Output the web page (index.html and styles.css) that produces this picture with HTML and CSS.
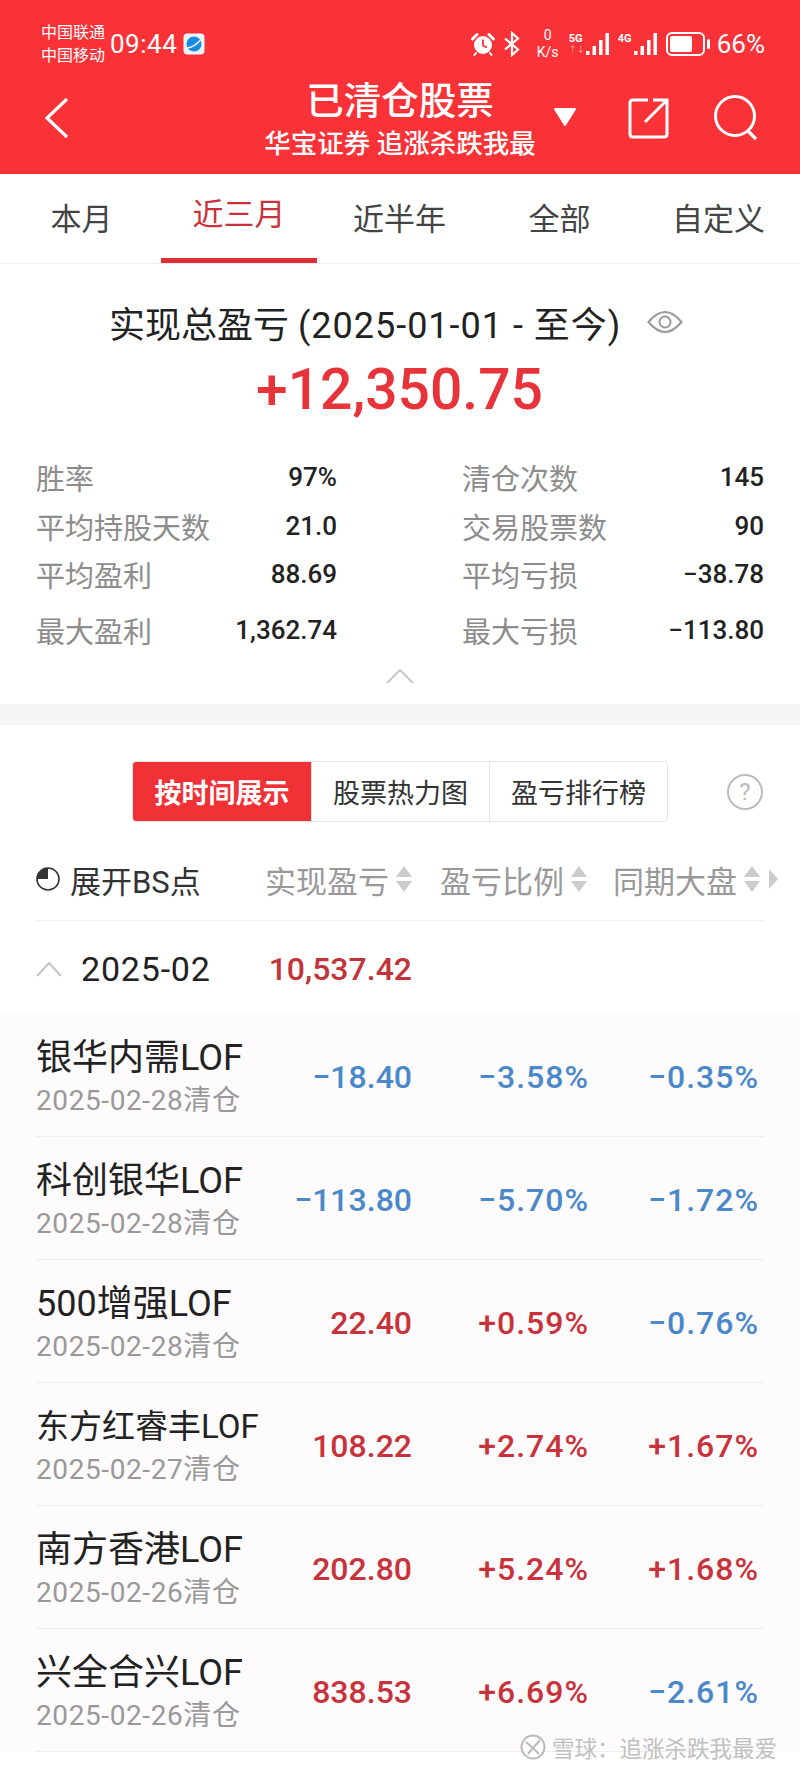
FILE: index.html
```html
<!DOCTYPE html>
<html lang="zh-CN">
<head>
  <meta charset="UTF-8" />
  <meta name="viewport" content="width=device-width, initial-scale=1" />
  <title>已清仓股票</title>
  <link rel="stylesheet" href="styles.css">
</head>
<body>
<div class="page">

  <header class="top">
    <div class="status">
      <div class="carrier"><span>中国联通</span><span>中国移动</span></div>
      <span class="clock">09:44</span>
      <svg class="app-icon" viewBox="0 0 22 22" width="22" height="22">
        <rect x="0.5" y="0.5" width="21" height="21" rx="4" fill="#eaf4fc"/>
        <circle cx="11" cy="11" r="7.5" fill="#1a8be0"/>
        <path d="M3.5 15 C9 15 15 10 18.5 6" stroke="#eaf4fc" stroke-width="1.4" fill="none"/>
      </svg>
      <div class="status-right">
        <svg class="alarm" viewBox="0 0 24 24" width="24" height="24">
          <circle cx="12" cy="13" r="9" fill="#fff"/>
          <path d="M1.5 7 L6 2.5 M22.5 7 L18 2.5" stroke="#fff" stroke-width="3" stroke-linecap="round"/>
          <path d="M5 21 L3.5 23 M19 21 L20.5 23" stroke="#fff" stroke-width="2" stroke-linecap="round"/>
          <path d="M12 7.5 V13.5 L16 15.5" stroke="#f93238" stroke-width="1.8" fill="none"/>
        </svg>
        <svg class="bt" viewBox="0 0 18 26" width="18" height="26">
          <path d="M2 7.5 L15 18.5 L9 24 V2 L15 7.5 L2 18.5" stroke="#fff" stroke-width="2.2" fill="none"/>
        </svg>
        <div class="speed"><span>0</span><span>K/s</span></div>
        <div class="net">
          <div class="net-label"><b>5G</b><i>↑↓</i></div>
          <svg viewBox="0 0 25 24" width="25" height="24"><path d="M1 19h3.5v4H1zM7.500 14h3.500v9H7.500zM14 8h3.500v15H14zM20.500 1H24v22h-3.500z" fill="#fff"/></svg>
        </div>
        <div class="net">
          <div class="net-label"><b>4G</b><i></i></div>
          <svg viewBox="0 0 25 24" width="25" height="24"><path d="M1 19h3.500v4H1zM7.500 14h3.500v9H7.500zM14 8h3.500v15H14zM20.500 1H24v22h-3.500z" fill="#fff"/></svg>
        </div>
        <svg class="battery" viewBox="0 0 45 24" width="45" height="24">
          <rect x="1" y="1" width="37" height="22" rx="5" fill="none" stroke="#fff" stroke-width="2"/>
          <rect x="4" y="4" width="22" height="16" rx="2" fill="#fff"/>
          <rect x="41" y="7" width="3" height="10" rx="1.5" fill="#fff"/>
        </svg>
        <span class="pct">66%</span>
      </div>
    </div>
    <div class="nav">
      <svg class="back" viewBox="0 0 26 42" width="26" height="42">
        <path d="M23 2 L3 21 L23 40" stroke="#fff" stroke-width="3.2" fill="none"/>
      </svg>
      <div class="nav-title">
        <h1>已清仓股票</h1>
        <p>华宝证券 追涨杀跌我最</p>
      </div>
      <svg class="drop" viewBox="0 0 24 20" width="24" height="20">
        <path d="M2 2 H22 L12 18 Z" fill="#fff" stroke="#fff" stroke-width="2" stroke-linejoin="round"/>
      </svg>
      <svg class="share" viewBox="0 0 42 42" width="42" height="42">
        <path d="M20 3 H5 Q2 3 2 6 V37 Q2 40 5 40 H36 Q39 40 39 37 V3 H25 M39 3 L17 25" stroke="#fff" stroke-width="3" fill="none"/>
      </svg>
      <svg class="search" viewBox="0 0 46 46" width="46" height="46">
        <circle cx="22" cy="21" r="19.5" stroke="#fff" stroke-width="3" fill="none"/>
        <path d="M35 36 L43 44" stroke="#fff" stroke-width="3.4"/>
      </svg>
    </div>
  </header>

  <nav class="tabs">
    <a>本月</a>
    <a class="active">近三月</a>
    <a>近半年</a>
    <a>全部</a>
    <a>自定义</a>
  </nav>

  <section class="summary">
    <div class="sum-title">
      <span>实现总盈亏 <span class="range">(2025-01-01 - 至今)</span></span>
      <svg class="eye" viewBox="0 0 36 26" width="36" height="26">
        <path d="M1.5 13 Q18 -7 34.500 13 Q18 33 1.5 13 Z" stroke="#999" stroke-width="2" fill="none"/>
        <circle cx="18" cy="13" r="5.500" stroke="#999" stroke-width="2" fill="none"/>
      </svg>
    </div>
    <div class="sum-amount">+12,350.75</div>
    <div class="stats">
      <div class="stat"><span>胜率</span><b>97%</b></div>
      <div class="stat"><span>清仓次数</span><b>145</b></div>
      <div class="stat"><span>平均持股天数</span><b>21.0</b></div>
      <div class="stat"><span>交易股票数</span><b>90</b></div>
      <div class="stat"><span>平均盈利</span><b>88.69</b></div>
      <div class="stat"><span>平均亏损</span><b>−38.78</b></div>
      <div class="stat tall"><span>最大盈利</span><b>1,362.74</b></div>
      <div class="stat tall"><span>最大亏损</span><b>−113.80</b></div>
    </div>
    <svg class="fold" viewBox="0 0 28 16" width="28" height="16">
      <path d="M1 15 L14 2 L27 15" stroke="#c8c8c8" stroke-width="2" fill="none"/>
    </svg>
  </section>

  <div class="band"></div>

  <div class="seg-row">
    <div class="seg">
      <a class="on">按时间展示</a>
      <a>股票热力图</a>
      <a>盈亏排行榜</a>
    </div>
    <span class="help">?</span>
  </div>

  <div class="thead">
    <div class="bs">
      <svg viewBox="0 0 24 24" width="24" height="24">
        <circle cx="12" cy="12" r="11" stroke="#333" stroke-width="1.600" fill="none"/>
        <path d="M12 12 V1 A11 11 0 0 0 1 12 Z" fill="#333"/>
      </svg>
      <span>展开BS点</span>
    </div>
    <div class="th"><span>实现盈亏</span><i class="sort"></i></div>
    <div class="th"><span>盈亏比例</span><i class="sort"></i></div>
    <div class="th"><span>同期大盘</span><i class="sort"></i><i class="more"></i></div>
  </div>

  <div class="group">
    <svg viewBox="0 0 26 16" width="26" height="16">
      <path d="M1 15 L13 2 L25 15" stroke="#c4c4c4" stroke-width="2" fill="none"/>
    </svg>
    <span class="month">2025-02</span>
    <b class="month-val">10,537.42</b>
  </div>

  <div class="list">
    <div class="row">
      <div class="name"><strong>银华内需LOF</strong><small>2025-02-28清仓</small></div>
      <span class="down">−18.40</span><span class="down">−3.58%</span><span class="down">−0.35%</span>
    </div>
    <div class="row">
      <div class="name"><strong>科创银华LOF</strong><small>2025-02-28清仓</small></div>
      <span class="down">−113.80</span><span class="down">−5.70%</span><span class="down">−1.72%</span>
    </div>
    <div class="row">
      <div class="name"><strong>500增强LOF</strong><small>2025-02-28清仓</small></div>
      <span class="up">22.40</span><span class="up">+0.59%</span><span class="down">−0.76%</span>
    </div>
    <div class="row">
      <div class="name"><strong class="small-name">东方红睿丰LOF</strong><small>2025-02-27清仓</small></div>
      <span class="up">108.22</span><span class="up">+2.74%</span><span class="up">+1.67%</span>
    </div>
    <div class="row">
      <div class="name"><strong>南方香港LOF</strong><small>2025-02-26清仓</small></div>
      <span class="up">202.80</span><span class="up">+5.24%</span><span class="up">+1.68%</span>
    </div>
    <div class="row">
      <div class="name"><strong>兴全合兴LOF</strong><small>2025-02-26清仓</small></div>
      <span class="up">838.53</span><span class="up">+6.69%</span><span class="down">−2.61%</span>
    </div>
  </div>

  <div class="watermark">
    <svg viewBox="0 0 26 26" width="26" height="26">
      <circle cx="13" cy="13" r="11.500" stroke="#bbb" stroke-width="2" fill="#fff" fill-opacity="0.6"/>
      <path d="M6 8 L13 14 L8 20 M20 6 L13 14 L19 20" stroke="#bbb" stroke-width="2" fill="none"/>
    </svg>
    <span>雪球：追涨杀跌我最爱</span>
  </div>

</div>
</body>
</html>
```

FILE: styles.css
```css
* {
  box-sizing: border-box;
}
body {
  margin: 0;
  background: #fff;
  font-family: Roboto, "Noto Sans CJK SC", sans-serif;
  color: #222;
}
.page {
  position: relative;
  width: 800px;
  height: 1769px;
  overflow: hidden;
}

/* red header */
.top {
  height: 174px;
  background: #f93238;
  color: #fff;
}
.status {
  display: flex;
  align-items: center;
  height: 74px;
  padding: 14px 35px 0 41px;
}
.carrier {
  display: flex;
  flex-direction: column;
  width: 69px;
  font-size: 16px;
  line-height: 23px;
}
.clock {
  width: 73px;
  font-size: 26px;
  letter-spacing: 0.5px;
}
.app-icon {
  display: block;
}
.status-right {
  display: flex;
  align-items: center;
  margin-left: auto;
}
.alarm {
  margin-right: 8px;
}
.bt {
  margin-right: 13px;
}
.speed {
  display: flex;
  flex-direction: column;
  align-items: center;
  width: 28px;
  margin-right: 7px;
  font-size: 14px;
  line-height: 17px;
}
.net {
  display: flex;
  align-items: flex-end;
  margin-right: 8px;
}
.net-label {
  display: flex;
  flex-direction: column;
  height: 24px;
  font-size: 11px;
  line-height: 13px;
}
.net-label b {
  display: block;
  width: 15px;
}
.net-label i {
  font-style: normal;
  font-size: 8px;
  line-height: 10px;
  opacity: 0.55;
}
.battery {
  margin-right: 6px;
}
.pct {
  font-size: 26px;
}
.nav {
  display: flex;
  align-items: center;
  height: 100px;
  padding: 0 30px 12px 44px;
}
.nav-title {
  width: 290px;
  margin-left: 185px;
  text-align: center;
}
.nav-title h1 {
  margin: 0;
  font-size: 37.5px;
  line-height: 50px;
  font-weight: 500;
}
.nav-title p {
  margin: 2px 0 0;
  font-size: 26.5px;
  line-height: 32px;
  font-weight: 500;
  white-space: nowrap;
}
.drop {
  margin-left: 8px;
  margin-top: -2px;
}
.share {
  margin-left: 51px;
}
.search {
  margin-left: 43px;
}

/* period tabs */
.tabs {
  display: grid;
  grid-template-columns: 159px 156px 165px 155px 1fr;
  height: 90px;
  padding-left: 2px;
  border-bottom: 1px solid #eee;
}
.tabs a {
  display: flex;
  align-items: center;
  justify-content: center;
  height: 89px;
  padding-bottom: 4px;
  font-size: 31px;
  color: #444;
}
.tabs a.active {
  padding-bottom: 10px;
  color: #c9323a;
  border-bottom: 5px solid #dd2f37;
}

/* totals */
.summary {
  display: flex;
  flex-direction: column;
  height: 440px;
  padding: 0 36px;
}
.sum-title {
  display: flex;
  align-items: center;
  height: 46px;
  margin-top: 35px;
  padding-left: 73px;
  font-size: 36px;
  color: #222;
}
.range {
  letter-spacing: 1px;
}
.eye {
  margin-left: 26px;
}
.sum-amount {
  margin-top: 10px;
  height: 70px;
  line-height: 70px;
  padding-left: 220px;
  font-size: 57px;
  font-weight: 500;
  color: #e7333a;
}
.stats {
  display: grid;
  grid-template-columns: 301px 302px;
  column-gap: 125px;
  margin-top: 28px;
}
.stat {
  display: flex;
  align-items: center;
  justify-content: space-between;
  height: 48.5px;
}
.stat span {
  font-size: 29px;
  color: #8c8c8c;
}
.stat b {
  font-size: 26px;
  font-weight: 500;
  color: #222;
}
.stat.tall {
  height: 57px;
  padding-top: 6px;
}
.fold {
  align-self: center;
  margin-top: 12px;
}
.band {
  height: 21px;
  background: #f5f5f5;
}

/* view switch */
.seg-row {
  display: flex;
  align-items: center;
  height: 61px;
  margin-top: 36px;
  padding-left: 132px;
}
.seg {
  display: grid;
  grid-template-columns: 178px 178px 178px;
  height: 61px;
  border: 1px solid #e4e4e4;
  border-radius: 4px;
  overflow: hidden;
}
.seg a {
  display: flex;
  align-items: center;
  justify-content: center;
  font-size: 27px;
  color: #333;
}
.seg a + a {
  border-left: 1px solid #e4e4e4;
}
.seg a.on {
  background: #f03236;
  color: #fff;
  font-weight: 700;
}
.help {
  display: flex;
  align-items: center;
  justify-content: center;
  width: 36px;
  height: 36px;
  margin-left: 59px;
  border: 2px solid #bbb;
  border-radius: 50%;
  font-size: 24px;
  color: #bbb;
}

/* list head */
.thead {
  display: grid;
  grid-template-columns: 229px 175px 173px 1fr;
  align-items: center;
  height: 99px;
  margin: 0 36px;
  padding-top: 16px;
  border-bottom: 1px solid #eee;
}
.bs {
  display: flex;
  align-items: center;
  gap: 10px;
  font-size: 31px;
  color: #333;
}
.th {
  display: flex;
  align-items: center;
  font-size: 31px;
  color: #999;
  white-space: nowrap;
}
.sort {
  position: relative;
  width: 16px;
  height: 30px;
  margin-left: 7px;
}
.sort::before,
.sort::after {
  content: "";
  position: absolute;
  left: 0;
  border-left: 8px solid transparent;
  border-right: 8px solid transparent;
}
.sort::before {
  top: 2px;
  border-bottom: 11px solid #ccc;
}
.sort::after {
  bottom: 2px;
  border-top: 11px solid #ccc;
}
.more {
  width: 0;
  height: 0;
  margin-left: 9px;
  border-top: 10px solid transparent;
  border-bottom: 10px solid transparent;
  border-left: 9px solid #ccc;
}

/* month group */
.group {
  display: flex;
  align-items: center;
  height: 93px;
  padding-left: 36px;
  padding-top: 3px;
  background: #fff;
}
.month {
  margin-left: 19px;
  font-size: 34px;
  letter-spacing: 0.8px;
  color: #222;
}
.month-val {
  margin-left: auto;
  margin-right: 388px;
  font-size: 32px;
  font-weight: 500;
  color: #c0343a;
}

/* stock rows */
.list {
  padding: 0 36px 0;
  background: #fdfbfc;
}
.row {
  display: grid;
  grid-template-columns: 240px 136px 177px 170px;
  align-items: center;
  height: 123px;
  padding-right: 5px;
  border-bottom: 1px solid #eee;
  font-size: 32px;
  font-weight: 500;
  text-align: right;
  white-space: nowrap;
}
.row span {
  padding-top: 3px;
}
.row span:nth-child(n+3) {
  letter-spacing: 1px;
}
.name {
  display: flex;
  flex-direction: column;
  text-align: left;
}
.name strong {
  font-size: 36px;
  font-weight: 400;
  line-height: 46px;
  color: #222;
}
.name strong.small-name {
  font-size: 33px;
}
.name small {
  margin-top: 5px;
  font-size: 28px;
  font-weight: 400;
  letter-spacing: 0.6px;
  line-height: 30px;
  color: #999;
}
.up {
  color: #c8323a;
}
.down {
  color: #4a88c9;
}

.watermark {
  position: absolute;
  left: 520px;
  top: 1731px;
  display: flex;
  align-items: center;
  gap: 6px;
  font-size: 22.5px;
  color: #c0c0c0;
}
```
